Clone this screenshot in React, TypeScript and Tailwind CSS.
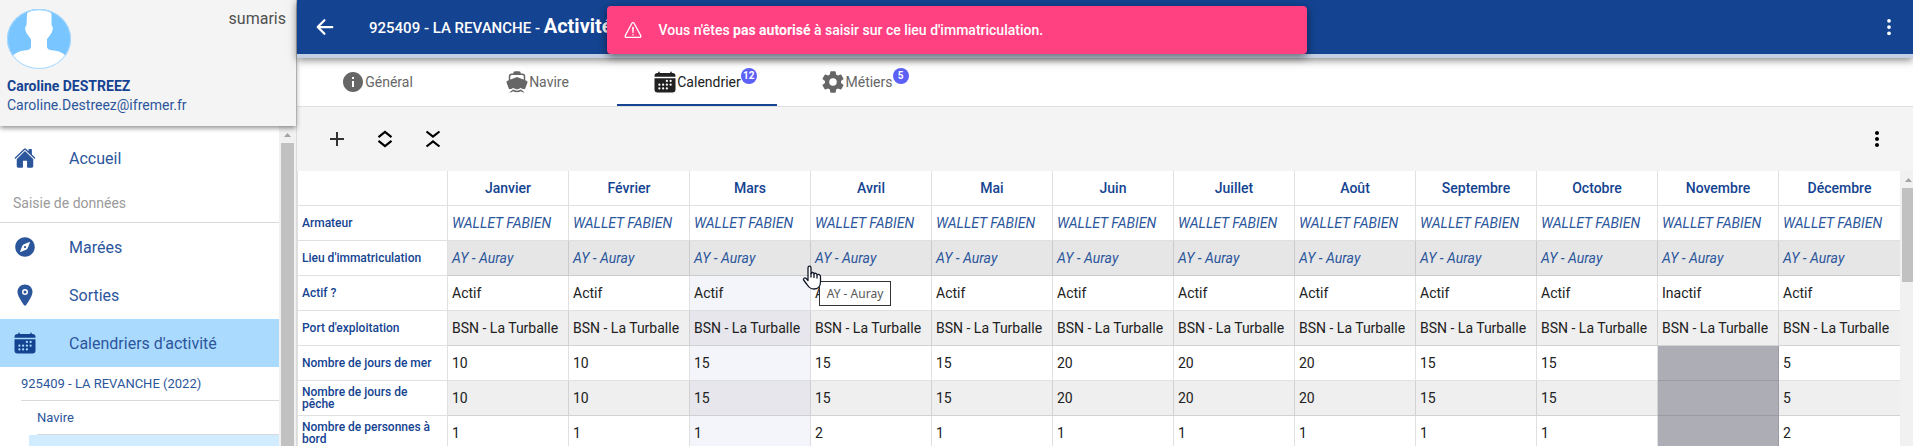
import type { ReactNode } from "react";
import {
  IoArrowBack,
  IoBoat,
  IoCalendar,
  IoCompass,
  IoEllipsisVertical,
  IoHome,
  IoLocation,
  IoSettingsSharp,
  IoWarningOutline,
} from "react-icons/io5";
import { MdAdd, MdInfo, MdMoreVert } from "react-icons/md";

const months = [
  "Janvier", "Février", "Mars", "Avril", "Mai", "Juin",
  "Juillet", "Août", "Septembre", "Octobre", "Novembre", "Décembre",
];

const HIGHLIGHTED_MONTH = 2;

type Row = { label: string; values: string[]; tone: "plain" | "shaded" | "dark"; italic?: boolean };

const repeat = (value: string) => months.map(() => value);

const rows: Row[] = [
  { label: "Armateur", values: repeat("WALLET FABIEN"), tone: "plain", italic: true },
  { label: "Lieu d'immatriculation", values: repeat("AY - Auray"), tone: "dark", italic: true },
  { label: "Actif ?", values: months.map((m) => (m === "Novembre" ? "Inactif" : "Actif")), tone: "plain" },
  { label: "Port d'exploitation", values: repeat("BSN - La Turballe"), tone: "shaded" },
  { label: "Nombre de jours de mer", values: ["10", "10", "15", "15", "15", "20", "20", "20", "15", "15", "", "5"], tone: "plain" },
  { label: "Nombre de jours de pêche", values: ["10", "10", "15", "15", "15", "20", "20", "20", "15", "15", "", "5"], tone: "shaded" },
  { label: "Nombre de personnes à bord", values: ["1", "1", "1", "2", "1", "1", "1", "1", "1", "1", "", "2"], tone: "plain" },
];

function cellTone(row: Row, index: number) {
  if (row.values[index] === "") return "bg-[#acadb5] border-[#9a9ba2]";
  if (row.tone === "dark") return "bg-[#e6e6e6] border-[#cbcbcb]";
  if (index === HIGHLIGHTED_MONTH && !row.italic) {
    return row.tone === "shaded" ? "bg-[#e6e6ec] border-[#cfcfd4]" : "bg-[#f4f5fa] border-[#dcdce1]";
  }
  return row.tone === "shaded" ? "bg-[#efefef] border-[#d2d2d2]" : "bg-white border-[#e0e0e0]";
}

function Avatar() {
  return (
    <svg viewBox="0 0 64 60" className="h-[60px] w-16" role="img" aria-label="Caroline DESTREEZ">
      <defs>
        <clipPath id="avatar-clip">
          <ellipse cx="32" cy="30" rx="32" ry="30" />
        </clipPath>
      </defs>
      <ellipse cx="32" cy="30" rx="32" ry="30" fill="#78c5ff" />
      <path
        clipPath="url(#avatar-clip)"
        fill="#fff"
        d="M20 5C21 0 43 0 44.500 5L44.500 16C46.500 18 46 21 44.500 24C43 27 40 29 40 31V38C41 42 46 41 50 42C57 44 60 47 62 52V60H2V52C4 47 8 44 14 42C18 41 23 42 24 38V31C24 29 21 27 19.500 24C18 21 17.500 18 19.500 16Z"
      />
      <ellipse cx="32" cy="30" rx="31.500" ry="29.500" fill="none" stroke="#a8d9ff" strokeWidth="1" />
    </svg>
  );
}

function Chevrons({ d }: { d: string }) {
  return (
    <svg viewBox="0 0 24 24" className="size-6" fill="none" stroke="currentColor" strokeWidth="2.200" aria-hidden="true">
      <path d={d} />
    </svg>
  );
}

function MenuItem({ icon, label, active }: { icon: ReactNode; label: string; active?: boolean }) {
  return (
    <a
      href="#"
      aria-current={active ? "page" : undefined}
      className={`flex h-12 items-center gap-8 pl-[13px] text-base ${active ? "bg-[#abdaff] text-[#144391]" : "text-[#2c569c]"}`}
    >
      <span className="flex w-6 justify-center text-[22px]">{icon}</span>
      <span className={active ? "pt-0.5 text-[#2c569c]" : "pt-0.5"}>{label}</span>
    </a>
  );
}

function Sidebar() {
  return (
    <aside className="flex w-[297px] shrink-0 flex-col border-r border-[#dcdcdc] bg-white">
      <header className="relative z-10 h-[126px] bg-[#f4f4f4] pt-[9px] pr-2.5 pl-[7px] shadow-[0_2px_5px_rgba(0,0,0,0.45)]">
        <div className="flex items-start justify-between">
          <Avatar />
          <span className="text-base leading-5 text-[#505050]">sumaris</span>
        </div>
        <div className="pt-2 text-sm leading-[19px]">
          <p className="font-bold text-[#144391]">Caroline DESTREEZ</p>
          <a href="#" className="text-[#2c569c]">Caroline.Destreez@ifremer.fr</a>
        </div>
      </header>
      <div className="flex min-h-0 flex-1">
        <nav className="min-w-0 flex-1 overflow-hidden pt-2">
          <MenuItem icon={<IoHome />} label="Accueil" />
          <h2 className="flex h-[41px] items-center border-b border-[#d9d9d9] pt-0.5 pl-[13px] text-sm text-[#9a9a9a]">
            Saisie de données
          </h2>
          <MenuItem icon={<IoCompass className="size-6" />} label="Marées" />
          <MenuItem icon={<IoLocation className="size-6" />} label="Sorties" />
          <MenuItem icon={<IoCalendar className="size-6" />} label="Calendriers d'activité" active />
          <a href="#" className="ml-[21px] flex h-[34px] items-center border-b border-[#d9d9d9] text-[13px] text-[#2c569c]">
            925409 - LA REVANCHE (2022)
          </a>
          <a href="#" className="ml-[37px] flex h-[34px] items-center border-b border-[#d9d9d9] text-[13px] text-[#2c569c]">
            Navire
          </a>
          <div className="ml-[29px] h-[34px] bg-[#d1ecff]" />
        </nav>
        <div className="flex w-[17px] flex-col items-center bg-[#f1f1f1]">
          <ScrollArrow />
          <div className="w-[13px] flex-1 bg-[#c1c1c1]" />
        </div>
      </div>
    </aside>
  );
}

function ScrollArrow() {
  return (
    <svg viewBox="0 0 17 17" className="size-[17px] shrink-0" aria-hidden="true">
      <path d="M5 11L8.500 7L12 11Z" fill="#a3a3a3" />
    </svg>
  );
}

function Tab({ icon, label, badge, active }: { icon: ReactNode; label: string; badge?: string; active?: boolean }) {
  return (
    <button
      type="button"
      role="tab"
      aria-selected={!!active}
      className={`flex h-12 w-40 items-center justify-center border-b-2 pt-0.5 text-sm ${active ? "border-[#144391] text-[#212121]" : "border-transparent text-[#666666]"}`}
    >
      {icon}
      <span className="relative">
        {label}
        {badge && (
          <span className="absolute -top-1 left-full flex size-4 items-center justify-center rounded-full bg-[#5c60f5] text-[10px] leading-4 font-bold text-white">
            {badge}
          </span>
        )}
      </span>
    </button>
  );
}

function ActivityTable() {
  return (
    <table className="w-full table-fixed border-separate border-spacing-0">
      <thead>
        <tr className="h-[35px]">
          <td className="w-[151px] border-r border-b border-l border-[#e0e0e0] bg-white" />
          {months.map((month) => (
            <th
              key={month}
              scope="col"
              className="border-r border-b border-[#e0e0e0] bg-white p-0 text-center text-sm font-medium text-[#144391] last:border-r-0"
            >
              {month}
            </th>
          ))}
        </tr>
      </thead>
      <tbody>
        {rows.map((row) => (
          <tr key={row.label} className="h-[35px]">
            <th
              scope="row"
              className="border-r border-b border-l border-[#e0e0e0] bg-white py-0 pr-2 pl-1 text-left text-xs leading-3 font-medium text-[#144391]"
            >
              {row.label}
            </th>
            {row.values.map((value, index) => (
              <td
                key={months[index]}
                className={`overflow-hidden border-r border-b p-0 pl-1 text-sm leading-4 whitespace-nowrap last:border-r-0 ${row.italic ? "text-[#2c569c] italic" : "text-[#212121]"} ${cellTone(row, index)}`}
              >
                {value}
              </td>
            ))}
          </tr>
        ))}
      </tbody>
    </table>
  );
}

function HandCursor() {
  return (
    <svg viewBox="0 0 20 25" className="absolute top-[265px] left-[802px] z-30 h-[25px] w-5" aria-hidden="true">
      <path
        d="M6 3C6 .6 9 .6 9 3V8.500C9.500 7 12 7.200 12 9C12.500 7.800 15 8 15 9.800C16 9 18.500 9.300 18.500 11.500V17C18.500 21 16 24 12 24C8 24 6.500 22 5 19.500L1.600 15C.8 13.500 2.800 12.200 4.200 13.500L6 15.500Z"
        fill="#fff"
        stroke="#111827"
        strokeWidth="1.300"
        strokeLinejoin="round"
      />
      <path d="M9 8V12.500M12 9V13M15 10V13.500" stroke="#111827" strokeWidth="1.300" fill="none" />
    </svg>
  );
}

export default function App() {
  return (
    <div className="relative flex h-screen overflow-hidden bg-white font-['Roboto',sans-serif]">
      <Sidebar />
      <main className="flex min-w-0 flex-1 flex-col bg-[#f4f4f4]">
        <header className="relative z-10 flex h-[58px] shrink-0 items-center border-b-4 border-[#c5cfe3] bg-[#144391] pr-3.5 pl-4 text-white shadow-[0_2px_8px_rgba(0,0,0,0.5)]">
          <button type="button" aria-label="Retour">
            <IoArrowBack className="size-6" />
          </button>
          <h1 className="flex-1 pl-8 text-[15px] font-medium">
            925409 - LA REVANCHE - <span className="text-xl leading-6 font-bold">Activité</span>
          </h1>
          <button type="button" aria-label="Plus d'options">
            <IoEllipsisVertical className="size-5" />
          </button>
        </header>
        <div role="tablist" className="flex h-[49px] shrink-0 border-b border-[#e0e0e0] bg-white">
          <Tab icon={<MdInfo className="size-6" />} label="Général" />
          <Tab icon={<IoBoat className="size-6" />} label="Navire" />
          <Tab icon={<IoCalendar className="size-6" />} label="Calendrier" badge="12" active />
          <Tab icon={<IoSettingsSharp className="size-6" />} label="Métiers" badge="5" />
        </div>
        <div className="flex h-16 shrink-0 items-center pr-6 pl-7 text-[24px]">
          <div className="flex flex-1 gap-6">
            <button type="button" aria-label="Ajouter" className="text-[#333333]"><MdAdd /></button>
            <button type="button" aria-label="Tout déplier" className="text-black">
              <Chevrons d="M5.500 10.200L12 5L18.500 10.200M5.500 13.800L12 19L18.500 13.800" />
            </button>
            <button type="button" aria-label="Tout replier" className="text-black">
              <Chevrons d="M5.500 4.500L12 9.700L18.500 4.500M5.500 19.500L12 14.300L18.500 19.500" />
            </button>
          </div>
          <button type="button" aria-label="Options du tableau" className="text-black"><MdMoreVert /></button>
        </div>
        <div className="flex min-h-0 flex-1 overflow-hidden">
          <div className="min-w-0 flex-1">
            <ActivityTable />
          </div>
          <div className="w-[13px] overflow-hidden bg-[#f1f1f1]">
            <ScrollArrow />
            <div className="ml-0.5 h-[94px] bg-[#c1c1c1]" />
          </div>
        </div>
      </main>

      <div
        role="alert"
        className="absolute top-1.5 left-1/2 z-20 flex h-12 w-[700px] -translate-x-1/2 items-center gap-4 rounded bg-[#ff4081] pl-4 text-sm text-white shadow-[0_3px_8px_rgba(0,0,0,0.5)]"
      >
        <IoWarningOutline className="size-5" />
        <p className="font-medium">
          Vous n'êtes <b className="font-bold">pas autorisé</b> à saisir sur ce lieu d'immatriculation.
        </p>
      </div>

      <div
        role="tooltip"
        className="absolute top-[281px] left-[819px] z-20 flex h-[25px] w-[72px] items-center justify-center border border-[#333333] bg-white font-['Noto_Sans',sans-serif] text-xs text-[#575757]"
      >
        AY - Auray
      </div>
      <HandCursor />
    </div>
  );
}
